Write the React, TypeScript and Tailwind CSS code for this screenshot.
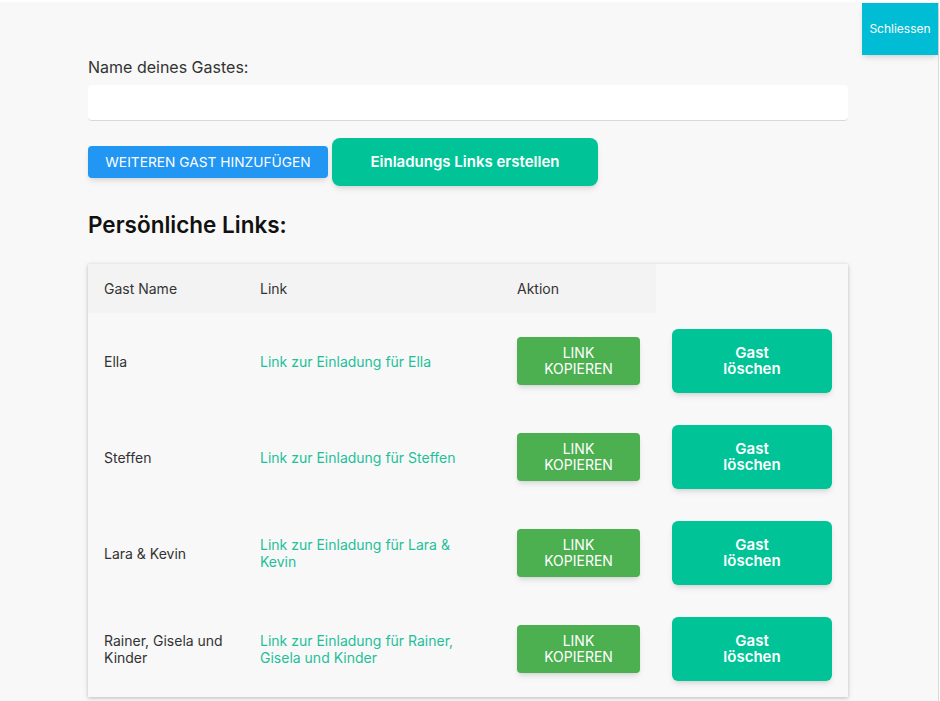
import React from 'react';

const guests = [
  { name: 'Ella', link: 'Link zur Einladung für Ella' },
  { name: 'Steffen', link: 'Link zur Einladung für Steffen' },
  { name: 'Lara & Kevin', link: 'Link zur Einladung für Lara & Kevin' },
  { name: 'Rainer, Gisela und Kinder', link: 'Link zur Einladung für Rainer, Gisela und Kinder' },
];

export default function App() {
  return (
    <div className="w-[940px] h-[701px] bg-white overflow-hidden" style={{ fontFamily: 'Inter, "Noto Sans", sans-serif' }}>
      <div className="relative mt-[2px] w-[939px] h-[699px] bg-[#f8f8f8] border-r border-[#d9d9d9]">
        {/* Close */}
        <button className="absolute top-[1px] right-0 w-[76px] h-[52px] bg-[#00bcd4] text-white text-[12px] shadow-md">
          Schliessen
        </button>

        <div className="pl-[88px] pt-[53px] w-[848px]">
          {/* Guest name input */}
          <label className="block text-[16px] leading-6 text-[#333]">Name deines Gastes:</label>
          <div className="mt-[6px] h-9 bg-white rounded-sm border-b border-[#d8d8d8]"></div>

          {/* Actions */}
          <div className="mt-[17px] flex items-center gap-1">
            <button className="w-[240px] h-8 rounded bg-[#2196f3] text-white text-[13.75px] uppercase shadow-md">
              Weiteren Gast hinzufügen
            </button>
            <button className="w-[266px] h-12 rounded-lg bg-[#00c497] text-white text-[15px] font-semibold shadow-md">
              Einladungs Links erstellen
            </button>
          </div>

          <h2 className="mt-[23px] text-[22.5px] leading-8 font-semibold text-[#111]">Persönliche Links:</h2>

          {/* Table */}
          <div className="mt-[23px] bg-[#f8f8f8] shadow-[0_1px_4px_rgba(0,0,0,0.25)] text-[14px] text-[#333]">
            <div className="grid grid-cols-[156px_257px_155px_192px]">
              <div className="h-[49px] bg-[#f3f3f3] px-4 flex items-center">Gast Name</div>
              <div className="h-[49px] bg-[#f3f3f3] px-4 flex items-center">Link</div>
              <div className="h-[49px] bg-[#f3f3f3] px-4 flex items-center">Aktion</div>
              <div className="h-[49px]"></div>
              {guests.map((g) => (
                <React.Fragment key={g.name}>
                  <div className="h-24 px-4 flex items-center leading-[17px]">{g.name}</div>
                  <div className="h-24 px-4 flex items-center leading-[17px] text-[#1fbf9a]">{g.link}</div>
                  <div className="h-24 px-4 flex items-center">
                    <button className="w-[123px] h-12 rounded bg-[#4caf50] text-white text-[14px] leading-4 uppercase shadow-md">
                      Link
                      <br />
                      Kopieren
                    </button>
                  </div>
                  <div className="h-24 px-4 flex items-center">
                    <button className="w-[160px] h-16 rounded-md bg-[#00c497] text-white text-[15px] leading-[16px] font-semibold shadow-md">
                      Gast
                      <br />
                      löschen
                    </button>
                  </div>
                </React.Fragment>
              ))}
            </div>
          </div>
        </div>
      </div>
    </div>
  );
}
